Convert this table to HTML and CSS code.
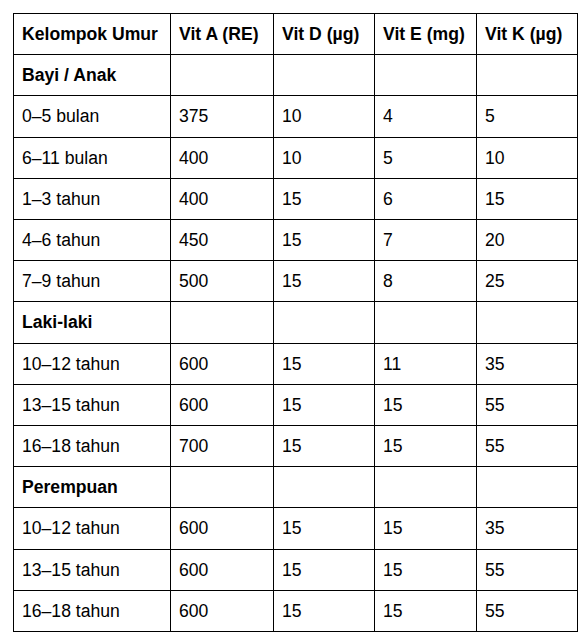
FILE: index.html
```html
<!DOCTYPE html>
<html lang="id">
<head>
<meta charset="utf-8">
<link rel="stylesheet" href="styles.css">
</head>
<body>
<table class="akg">
  <colgroup>
    <col class="c1"><col class="c2"><col class="c3"><col class="c4"><col class="c5">
  </colgroup>
  <thead>
    <tr><th>Kelompok Umur</th><th>Vit A (RE)</th><th>Vit D (µg)</th><th>Vit E (mg)</th><th>Vit K (µg)</th></tr>
  </thead>
  <tbody>
    <tr class="group"><td>Bayi / Anak</td><td></td><td></td><td></td><td></td></tr>
    <tr><td>0–5 bulan</td><td>375</td><td>10</td><td>4</td><td>5</td></tr>
    <tr><td>6–11 bulan</td><td>400</td><td>10</td><td>5</td><td>10</td></tr>
    <tr><td>1–3 tahun</td><td>400</td><td>15</td><td>6</td><td>15</td></tr>
    <tr><td>4–6 tahun</td><td>450</td><td>15</td><td>7</td><td>20</td></tr>
    <tr><td>7–9 tahun</td><td>500</td><td>15</td><td>8</td><td>25</td></tr>
    <tr class="group"><td>Laki-laki</td><td></td><td></td><td></td><td></td></tr>
    <tr><td>10–12 tahun</td><td>600</td><td>15</td><td>11</td><td>35</td></tr>
    <tr><td>13–15 tahun</td><td>600</td><td>15</td><td>15</td><td>55</td></tr>
    <tr><td>16–18 tahun</td><td>700</td><td>15</td><td>15</td><td>55</td></tr>
    <tr class="group"><td>Perempuan</td><td></td><td></td><td></td><td></td></tr>
    <tr><td>10–12 tahun</td><td>600</td><td>15</td><td>15</td><td>35</td></tr>
    <tr><td>13–15 tahun</td><td>600</td><td>15</td><td>15</td><td>55</td></tr>
    <tr><td>16–18 tahun</td><td>600</td><td>15</td><td>15</td><td>55</td></tr>
  </tbody>
</table>
</body>
</html>
```
FILE: styles.css
```css
html, body {
  margin: 0;
  padding: 0;
  background: #ffffff;
}
body {
  padding: 13px;
  font-family: "Liberation Sans", Arial, sans-serif;
  font-size: 17.6px;
  color: #000000;
}
.akg {
  border-collapse: collapse;
  width: 564px;
  table-layout: fixed;
}
.c1 { width: 157px; }
.c2 { width: 103px; }
.c3 { width: 101px; }
.c4 { width: 102px; }
.c5 { width: 101px; }
.akg th,
.akg td {
  border: 1px solid #000000;
  padding: 10px 8px;
  line-height: 20.2px;
  text-align: left;
  vertical-align: middle;
  white-space: nowrap;
}
.akg th {
  font-weight: bold;
}
.akg .group td:first-child {
  font-weight: bold;
}
```
